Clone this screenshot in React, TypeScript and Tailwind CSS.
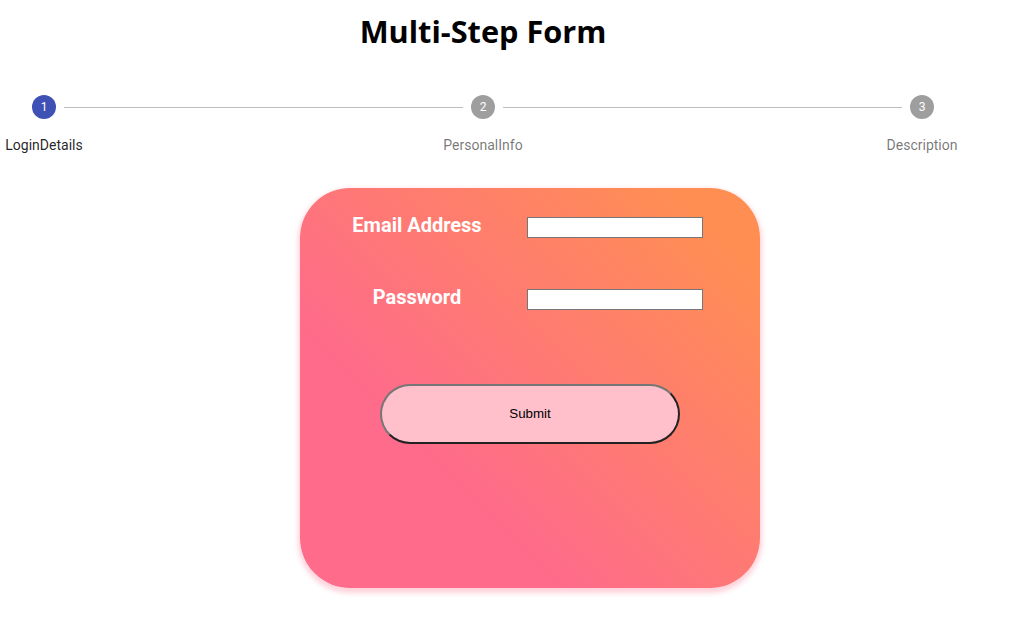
import React from 'react';

const steps = ['LoginDetails', 'PersonalInfo', 'Description'];

function StepCircle({ n, active }: { n: number; active: boolean }) {
    return (
        <div
            className={`w-6 h-6 rounded-full flex items-center justify-center text-white text-[12px] shrink-0 ${active ? 'bg-[#3f51b5]' : 'bg-[#9e9e9e]'}`}
        >
            {n}
        </div>
    );
}

function FieldRow({ label, type }: { label: string; type: string }) {
    return (
        <div className="flex items-center h-[28px]">
            <div className="w-[190px] ml-[22px] text-center text-white font-bold text-[20px] leading-none -mt-1">
                {label}
            </div>
            <input
                type={type}
                className="ml-[15px] w-[176px] h-[21px] bg-white border border-[#767676] px-1 text-[13px] outline-none"
            />
        </div>
    );
}

export default function App() {
    return (
        <div className="w-[1014px] h-[641px] bg-white overflow-hidden font-['Roboto',sans-serif]">
            <div className="w-[966px]">
                <h1 className="pt-[10px] text-center text-[30.7px] font-bold leading-[42px] text-black font-['Open_Sans',sans-serif]">
                    Multi-Step Form
                </h1>

                {/* stepper */}
                <div className="mt-[43px] flex items-center px-8">
                    {steps.map((s, i) => (
                        <React.Fragment key={s}>
                            <StepCircle n={i + 1} active={i === 0} />
                            {i < steps.length - 1 ? (
                                <div className="flex-1 mx-2 border-t border-[#bdbdbd]" />
                            ) : null}
                        </React.Fragment>
                    ))}
                </div>
                <div className="mt-4 flex justify-between">
                    {steps.map((s, i) => (
                        <div
                            key={s}
                            className={`w-[88px] text-center text-[14px] leading-5 whitespace-nowrap ${i === 0 ? 'text-[rgba(0,0,0,0.87)]' : 'text-[rgba(0,0,0,0.55)]'}`}
                        >
                            {s}
                        </div>
                    ))}
                </div>
            </div>

            {/* card */}
            <div className="ml-[300px] mt-[33px] w-[460px] h-[400px] rounded-[50px] bg-[linear-gradient(45deg,#FE6B8B_30%,#FF8E53_90%)] shadow-[0_3px_5px_2px_rgba(255,105,135,0.3)] pt-[25px] flex flex-col">
                <FieldRow label="Email Address" type="email" />
                <div className="h-[44px]" />
                <FieldRow label="Password" type="password" />
                <div className="mt-[71px] flex justify-center">
                    <button className="w-[300px] h-[60px] rounded-[30px] bg-[#ffc0cb] border-2 border-t-[#767676] border-l-[#767676] border-r-[#222] border-b-[#222] text-black text-[13.33px] font-['Liberation_Sans',Arial,sans-serif]">
                        Submit
                    </button>
                </div>
            </div>
        </div>
    );
}
